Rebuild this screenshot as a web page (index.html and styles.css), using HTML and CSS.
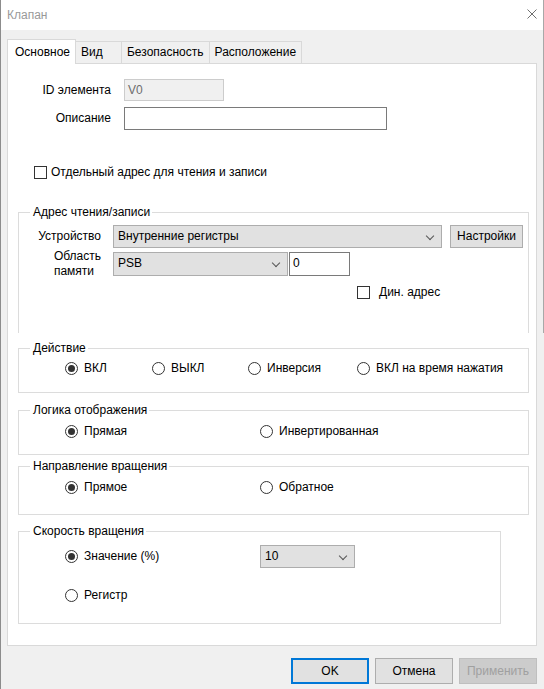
FILE: index.html
```html
<!DOCTYPE html>
<html lang="ru">
<head>
    <meta charset="UTF-8">
    <title>Клапан</title>
    <link rel="stylesheet" href="styles.css">
</head>
<body>
<div class="window">
    <div class="titlebar">
        <span class="title">Клапан</span>
        <svg class="close" width="10" height="10" viewBox="0 0 10 10">
            <path d="M0.5 0.5 L9.5 9.5 M9.5 0.5 L0.5 9.5" stroke="#6f6f6f" stroke-width="1" fill="none"/>
        </svg>
    </div>

    <div class="client">
        <ul class="tabs">
            <li class="tab active">Основное</li>
            <li class="tab tab-short">Вид</li>
            <li class="tab">Безопасность</li>
            <li class="tab">Расположение</li>
        </ul>

        <div class="panel">
            <div class="form-grid">
                <span class="field-label">ID элемента</span>
                <div class="textbox textbox-id disabled">V0</div>
                <span class="field-label">Описание</span>
                <div class="textbox textbox-desc"></div>
            </div>

            <div class="check-row check-split">
                <span class="checkbox"></span>
                <span>Отдельный адрес для чтения и записи</span>
            </div>

            <!-- address box is cut off at the bottom, no lower border -->
            <div class="group group-address">
                <div class="group-title">Адрес чтения/записи</div>
                <div class="addr-grid">
                    <span class="field-label">Устройство</span>
                    <div class="addr-line">
                        <div class="combo combo-device">Внутренние регистры<span class="chevron"></span></div>
                        <div class="button button-settings">Настройки</div>
                    </div>
                    <span class="field-label field-label-2">Область<br>памяти</span>
                    <div class="addr-line">
                        <div class="combo combo-area">PSB<span class="chevron"></span></div>
                        <div class="textbox textbox-offset">0</div>
                    </div>
                </div>
                <div class="check-row check-dyn">
                    <span class="checkbox"></span>
                    <span>Дин. адрес</span>
                </div>
            </div>

            <div class="group group-action">
                <div class="group-title">Действие</div>
                <div class="radio-row cols-4">
                    <span class="radio-item"><span class="radio checked"></span>ВКЛ</span>
                    <span class="radio-item"><span class="radio"></span>ВЫКЛ</span>
                    <span class="radio-item"><span class="radio"></span>Инверсия</span>
                    <span class="radio-item"><span class="radio"></span>ВКЛ на время нажатия</span>
                </div>
            </div>

            <div class="group group-logic">
                <div class="group-title">Логика отображения</div>
                <div class="radio-row cols-2">
                    <span class="radio-item"><span class="radio checked"></span>Прямая</span>
                    <span class="radio-item"><span class="radio"></span>Инвертированная</span>
                </div>
            </div>

            <div class="group group-dir">
                <div class="group-title">Направление вращения</div>
                <div class="radio-row cols-2">
                    <span class="radio-item"><span class="radio checked"></span>Прямое</span>
                    <span class="radio-item"><span class="radio"></span>Обратное</span>
                </div>
            </div>

            <div class="group group-speed">
                <div class="group-title">Скорость вращения</div>
                <div class="radio-row cols-2 speed-value">
                    <span class="radio-item"><span class="radio checked"></span>Значение (%)</span>
                    <div class="combo combo-speed">10<span class="chevron"></span></div>
                </div>
                <div class="radio-row speed-reg">
                    <span class="radio-item"><span class="radio"></span>Регистр</span>
                </div>
            </div>
        </div>

        <div class="dialog-buttons">
            <div class="button default">OK</div>
            <div class="button">Отмена</div>
            <div class="button disabled">Применить</div>
        </div>
    </div>
</div>
</body>
</html>
```

FILE: styles.css
```css
* {
    box-sizing: border-box;
}

body {
    margin: 0;
    font-family: "Segoe UI", "Liberation Sans", Arial, sans-serif;
    font-size: 12px;
    line-height: 15px;
    color: #000;
}

.window {
    position: relative;
    width: 544px;
    height: 689px;
    border-left: 1px solid #8c8c8c;
    background: #f0f0f0;
    display: flex;
    flex-direction: column;
}
/* right frame edge only shows on the upper part */
.window::after {
    content: "";
    position: absolute;
    top: 0;
    right: 0;
    width: 1px;
    height: 333px;
    background: #a8a8a8;
}

.titlebar {
    height: 30px;
    background: #fff;
    display: flex;
    align-items: center;
    justify-content: space-between;
    padding: 0 7px 0 6px;
}
.title {
    color: #999;
}
.close {
    margin-top: -2px;
}

.client {
    flex: 1;
    padding: 9px 7px 0 6px;
}

/* tabs */

.tabs {
    list-style: none;
    margin: 0;
    padding: 0;
    display: flex;
    align-items: flex-end;
    height: 24px;
}
.tab {
    height: 22px;
    line-height: 20px;
    padding: 0 5px;
    border: 1px solid #d9d9d9;
    border-bottom: none;
    border-left: none;
    background: #f0f0f0;
}
.tab-short {
    min-width: 46px;
}
.tab.active {
    height: 25px;
    margin-bottom: -1px;
    padding: 0 5px 0 7px;
    line-height: 25px;
    border-left: 1px solid #d9d9d9;
    background: #fff;
    position: relative;
    z-index: 1;
}

.panel {
    height: 583px;
    background: #fff;
    border: 1px solid #d9d9d9;
}

/* top fields */

.form-grid {
    display: grid;
    grid-template-columns: 103px 263px;
    column-gap: 13px;
    row-gap: 6px;
    padding-top: 15px;
    align-items: center;
}
.field-label {
    text-align: right;
}
.field-label-2 {
    justify-self: end;
    text-align: left;
}

.textbox {
    height: 23px;
    border: 1px solid #7a7a7a;
    background: #fff;
    padding: 3px 3px 0;
}
.textbox.disabled {
    border-color: #cccccc;
    background: #f0f0f0;
    color: #6d6d6d;
}
.textbox-id {
    width: 100px;
    height: 22px;
}
.textbox-offset {
    width: 61px;
    height: 24px;
}

.check-row {
    display: flex;
    align-items: center;
}
.checkbox {
    width: 13px;
    height: 13px;
    border: 1px solid #333;
    background: #fff;
    flex: none;
}
.check-split {
    margin: 35px 0 0 26px;
    gap: 4px;
}
.check-dyn {
    margin: 6px 0 0 338px;
    gap: 9px;
}

/* group boxes */

.group {
    border: 1px solid #dcdcdc;
    margin: 0 7px 0 10px;
}
.group-title {
    display: table;
    margin: -8px 0 0 11px;
    padding: 0 2px 0 3px;
    background: #fff;
}

.group-address {
    margin-top: 32px;
    height: 121px;
    border-bottom: none;
}
.group-action {
    margin-top: 15px;
    height: 45px;
}
.group-logic {
    margin-top: 17px;
    height: 45px;
}
.group-dir {
    margin-top: 11px;
    height: 49px;
}
.group-speed {
    margin: 16px 35px 0 10px;
    height: 93px;
}

.addr-grid {
    display: grid;
    grid-template-columns: 82px auto;
    column-gap: 12px;
    row-gap: 1px;
    align-items: center;
    margin-top: 5px;
}
.addr-line {
    display: flex;
    gap: 1px;
}

.combo {
    position: relative;
    height: 23px;
    border: 1px solid #adadad;
    background: #e1e1e1;
    padding: 3px 4px 0;
}
.chevron {
    position: absolute;
    right: 8px;
    top: 7px;
    width: 6px;
    height: 6px;
    border-right: 1px solid #555;
    border-bottom: 1px solid #555;
    transform: rotate(45deg);
}
.combo-device {
    width: 329px;
    margin-right: 7px;
}
.combo-area {
    width: 175px;
    height: 24px;
}
.combo-speed {
    width: 95px;
}

.button {
    height: 23px;
    border: 1px solid #adadad;
    background: #e1e1e1;
    text-align: center;
    line-height: 21px;
}
.button-settings {
    width: 73px;
}

/* radio rows */

.radio-row {
    display: grid;
    align-items: center;
    padding-left: 46px;
}
.cols-4 {
    grid-template-columns: 87px 96px 109px auto;
    margin-top: 5px;
}
.cols-2 {
    grid-template-columns: 195px auto;
    margin-top: 6px;
}
.radio-item {
    display: flex;
    align-items: center;
    gap: 6px;
}
.radio {
    width: 13px;
    height: 13px;
    border: 1px solid #333;
    border-radius: 50%;
    background: #fff;
    flex: none;
    display: flex;
    align-items: center;
    justify-content: center;
}
.radio.checked::after {
    content: "";
    width: 7px;
    height: 7px;
    border-radius: 50%;
    background: #333;
}

.speed-value {
    margin-top: 6px;
}
.speed-reg {
    margin-top: 20px;
}

/* bottom buttons */

.dialog-buttons {
    display: flex;
    justify-content: flex-end;
    gap: 6px;
    margin-top: 12px;
}
.dialog-buttons .button {
    width: 78px;
    height: 26px;
    line-height: 24px;
}
.button.default {
    border: 2px solid #0078d7;
    line-height: 22px;
}
.button.disabled {
    background: #cccccc;
    border-color: #bfbfbf;
    color: #a0a0a0;
}
```
